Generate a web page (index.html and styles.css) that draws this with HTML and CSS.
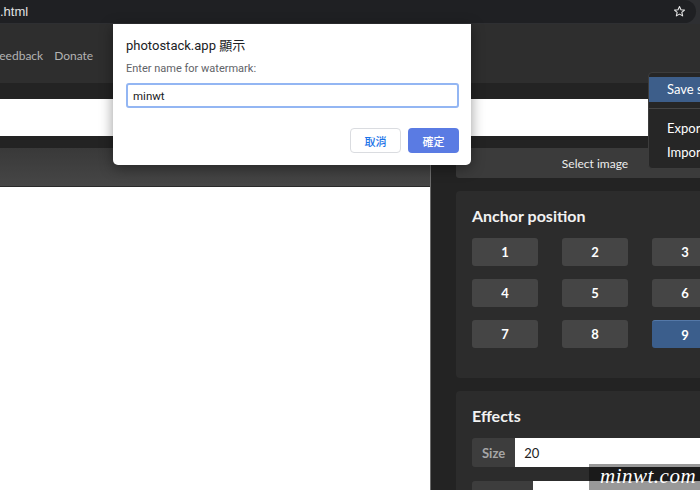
FILE: index.html
```html
<!DOCTYPE html>
<html lang="zh-TW">
<head>
    <meta charset="UTF-8">
    <meta name="viewport" content="width=device-width, initial-scale=1.0">
    <title>photostack.app</title>
    <link rel="stylesheet" href="styles.css">
</head>
<body>
    <!-- 瀏覽器網址列 -->
    <header class="browser-bar">
        <div class="omnibox">
            <span class="url">.html</span>
            <svg class="star" viewBox="0 0 24 24" width="13" height="13">
                <path d="M12 2.8l2.7 6 6.5.6-4.9 4.3 1.5 6.4L12 16.8l-5.8 3.3 1.5-6.4-4.9-4.3 6.5-.6z" fill="none" stroke="#e8e8e8" stroke-width="2" stroke-linejoin="round"/>
            </svg>
        </div>
    </header>

    <nav class="app-nav">
        <a class="nav-link first">Feedback</a>
        <a class="nav-link">Donate</a>
    </nav>

    <div class="notice"></div>

    <main class="workspace">
        <section class="preview">
            <div class="preview-head"></div>
            <div class="preview-canvas"></div>
        </section>

        <aside class="sidebar">
            <button class="select-btn">Select image</button>

            <div class="card">
                <h3 class="card-title">Anchor position</h3>
                <div class="anchor-grid">
                    <button class="anchor-btn">1</button>
                    <button class="anchor-btn">2</button>
                    <button class="anchor-btn">3</button>
                    <button class="anchor-btn">4</button>
                    <button class="anchor-btn">5</button>
                    <button class="anchor-btn">6</button>
                    <button class="anchor-btn">7</button>
                    <button class="anchor-btn">8</button>
                    <button class="anchor-btn active">9</button>
                </div>
            </div>

            <div class="card">
                <h3 class="card-title">Effects</h3>
                <div class="field">
                    <span class="field-label">Size</span>
                    <input class="field-input" value="20">
                </div>
                <div class="field">
                    <span class="field-label">Margin</span>
                    <input class="field-input" value="">
                </div>
            </div>
        </aside>
    </main>

    <!-- 設定選單 -->
    <div class="dropdown">
        <div class="menu-item highlighted">Save settings</div>
        <div class="menu-divider"></div>
        <div class="menu-item">Export settings</div>
        <div class="menu-item">Import settings</div>
    </div>

    <!-- prompt 對話框 -->
    <div class="dialog">
        <div class="dialog-title">photostack.app 顯示</div>
        <div class="dialog-msg">Enter name for watermark:</div>
        <input class="dialog-input" value="minwt">
        <div class="dialog-actions">
            <button class="dlg-btn cancel">取消</button>
            <button class="dlg-btn ok">確定</button>
        </div>
    </div>

    <div class="watermark">minwt.com</div>
</body>
</html>
```

FILE: styles.css
```css
body {
    margin: 0;
    width: 700px;
    height: 490px;
    overflow: hidden;
    position: relative;
    background: #232323;
    font-family: Lato, "Noto Sans", sans-serif;
}

/* 瀏覽器網址列 */
.browser-bar {
    height: 24px;
    background: #2e2f32;
}

.omnibox {
    height: 23px;
    margin-right: 4px;
    padding-right: 10px;
    background: #1f2023;
    border-radius: 0 12px 12px 0;
    display: flex;
    align-items: center;
    justify-content: space-between;
}

.url {
    color: #e2e2e2;
    font: 13px "Liberation Sans", sans-serif;
}

.star {
    display: block;
}

/* 頂部導覽 */
.app-nav {
    height: 56px;
    padding-top: 3px;
    background: #2e2e2e;
    display: flex;
    align-items: center;
    gap: 11px;
    font-size: 12px;
    color: #b3b3b3;
}

.nav-link.first {
    margin-left: -7px;
}

.notice {
    margin-top: 16px;
    height: 37px;
    background: #fff;
}

.workspace {
    display: flex;
    margin-top: 12px;
}

.preview {
    width: 430px;
    flex: none;
    border-right: 1px solid #6b6b6b;
}

.preview-head {
    height: 38px;
    background: linear-gradient(#393939, #464646);
    border-bottom: 1px solid #2a2a2a;
}

.preview-canvas {
    height: 305px;
    background: #fff;
}

.sidebar {
    width: 278px;
    flex: none;
    padding-left: 25px;
    display: flex;
    flex-direction: column;
    gap: 13px;
}

.select-btn {
    height: 30px;
    border: 0;
    border-radius: 3px;
    background: #3b3b3b;
    color: #ededed;
    font: 12px Lato, sans-serif;
}

.card {
    background: #2c2c2c;
    border-radius: 4px;
    padding: 14px 16px 30px;
}

.card-title {
    margin: 0 0 11px;
    font-size: 16px;
    line-height: 22px;
    font-weight: 700;
    color: #f2f2f2;
}

.anchor-grid {
    display: grid;
    grid-template-columns: repeat(3, 66px);
    grid-auto-rows: 28px;
    column-gap: 24px;
    row-gap: 13px;
}

.anchor-btn {
    border: 0;
    border-radius: 3px;
    background: #454545;
    color: #fff;
    font: 700 13px Lato, sans-serif;
}

.anchor-btn.active {
    background: #3b5e8c;
    border-top: 1px solid #5478a8;
}

.field {
    display: flex;
    height: 29px;
    margin-bottom: 14px;
}

.field-label {
    display: flex;
    align-items: center;
    padding: 0 10px;
    background: #3d3d3d;
    color: #a6a6a6;
    font-size: 13px;
    font-weight: 700;
    border-radius: 3px 0 0 3px;
}

.field-input {
    flex: 1;
    min-width: 0;
    border: 0;
    padding: 0 9px;
    background: #fff;
    color: #222;
    font: 13px Lato, sans-serif;
    border-radius: 0 3px 3px 0;
}

/* 設定選單 */
.dropdown {
    position: absolute;
    left: 648px;
    top: 72px;
    width: 160px;
    padding: 4px 0;
    background: #262626;
    border: 1px solid #3c3c3c;
    border-radius: 4px;
}

.menu-item {
    padding: 0 18px;
    line-height: 24px;
    color: #fff;
    font-size: 13px;
    white-space: nowrap;
}

.menu-item.highlighted {
    line-height: 25px;
    background: #3d5e8a;
}

.menu-divider {
    height: 1px;
    margin: 6px 0 7px;
    background: #444;
}

/* prompt 對話框 */
.dialog {
    position: absolute;
    left: 113px;
    top: 24px;
    width: 333px;
    padding: 13px 12px 12px 13px;
    background: #fff;
    border-radius: 0 0 5px 5px;
    box-shadow: 0 3px 14px rgba(0, 0, 0, 0.4);
    font-family: Roboto, "Noto Sans CJK TC", sans-serif;
}

.dialog-title {
    font-size: 13px;
    line-height: 18px;
    color: #202124;
}

.dialog-msg {
    margin-top: 6px;
    font-size: 11px;
    line-height: 16px;
    color: #5f6368;
}

.dialog-input {
    display: block;
    box-sizing: border-box;
    width: 100%;
    height: 25px;
    margin-top: 6px;
    padding: 0 5px;
    border: 2px solid #93b6f3;
    border-radius: 3px;
    font: 11.5px Roboto, sans-serif;
    color: #202124;
    outline: none;
}

.dialog-actions {
    display: flex;
    justify-content: flex-end;
    gap: 7px;
    margin-top: 20px;
}

.dlg-btn {
    width: 51px;
    height: 25px;
    border-radius: 4px;
    font: 500 11px "Noto Sans CJK TC", sans-serif;
}

.dlg-btn.cancel {
    background: #fff;
    border: 1px solid #dadce0;
    color: #1a73e8;
}

.dlg-btn.ok {
    background: #5a7be3;
    border: 0;
    color: #fff;
}

.watermark {
    position: absolute;
    right: 0;
    bottom: 0;
    width: 111px;
    height: 26px;
    box-sizing: border-box;
    padding-left: 11px;
    background: rgba(0, 0, 0, 0.4);
    color: #fff;
    font: italic 21px/24px "Liberation Serif", serif;
    letter-spacing: 0.5px;
}
```
